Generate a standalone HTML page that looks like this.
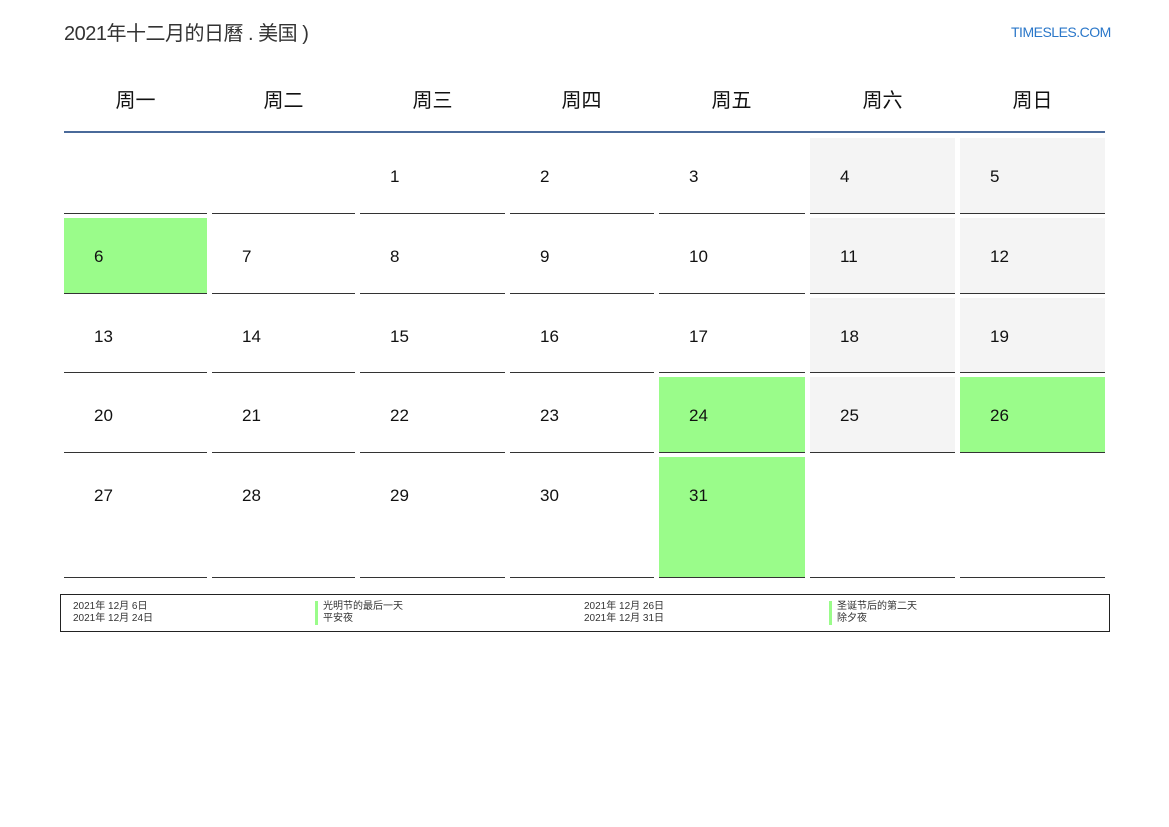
<!DOCTYPE html><html><head><meta charset="utf-8"><style>
body{margin:0;width:1169px;height:827px;background:#fff;position:relative;font-family:"Liberation Sans","Noto Sans CJK SC",sans-serif;color:#111}
.a{position:absolute}
.t{left:64px;top:17px;font-size:20px;color:#333;letter-spacing:-0.5px}
.logo{left:1011px;top:24px;font-size:14px;color:#2a77c9;letter-spacing:-0.5px}
.h{top:84px;font-size:20px;text-align:center;width:145px;color:#111}
.c{box-sizing:border-box;border-bottom:1px solid #333;font-size:17px;padding-left:30px;line-height:1}
.c span{position:absolute;top:30px}
.w{background:#f4f4f4}.g{background:#9afc8a}
.lg{left:60px;top:594px;width:1048px;height:36px;border:1px solid #222;font-size:10px;color:#333;line-height:12px}
.lg div{position:absolute;top:6px}
.bar{border-left:3px solid #9afc8a;padding-left:5px}
</style></head><body>
<div class="a t">2021年十二月的日曆 . 美国 )</div>
<div class="a logo">TIMESLES.COM</div>
<div class="a h" style="left:63px">周一</div><div class="a h" style="left:211px">周二</div><div class="a h" style="left:360px">周三</div><div class="a h" style="left:509px">周四</div><div class="a h" style="left:659px">周五</div><div class="a h" style="left:810px">周六</div><div class="a h" style="left:960px">周日</div>
<div class="a" style="left:64px;top:131px;width:1041px;height:2px;background:#4a6a9a"></div>
<div id="g"></div>
<div class="a lg">
<div style="left:12px">2021年 12月 6日<br>2021年 12月 24日</div>
<div class="bar" style="left:254px">光明节的最后一天<br>平安夜</div>
<div style="left:523px">2021年 12月 26日<br>2021年 12月 31日</div>
<div class="bar" style="left:768px">圣诞节后的第二天<br>除夕夜</div>
</div>
<script>
var xs=[64,212,360,510,659,810,960],ws=[143,143,145,144,146,145,145],ys=[138,218,298,377,457],hs=[76,76,75,76,121];
var green={6:1,24:1,26:1,31:1},h='';
for(var r=0;r<5;r++)for(var c=0;c<7;c++){var d=r*7+c-1;var txt=(d>=1&&d<=31)?d:'';
var cls='c';if(green[d])cls+=' g';else if(c>=5&&d>=1&&d<=31)cls+=' w';
h+='<div class="a '+cls+'" style="left:'+xs[c]+'px;top:'+ys[r]+'px;width:'+ws[c]+'px;height:'+hs[r]+'px"><span>'+txt+'</span></div>';}
document.getElementById('g').innerHTML=h;
</script>
</body></html>
